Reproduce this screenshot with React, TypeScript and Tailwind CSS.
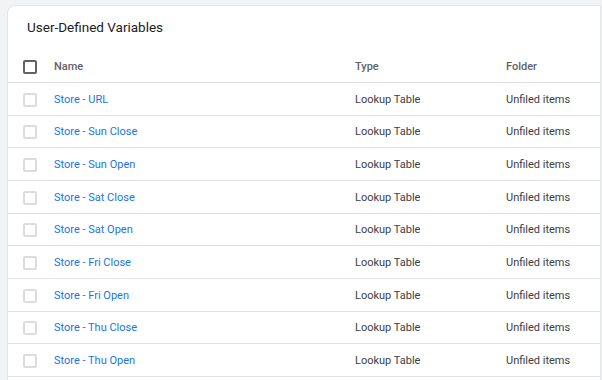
const rows = [
  'Store - URL',
  'Store - Sun Close',
  'Store - Sun Open',
  'Store - Sat Close',
  'Store - Sat Open',
  'Store - Fri Close',
  'Store - Fri Open',
  'Store - Thu Close',
  'Store - Thu Open',
];

export default function App() {
  return (
    <div className="h-[380px] w-[602px] overflow-hidden bg-[#f1f3f4] pl-[7px] pt-[5px] font-['Roboto',sans-serif]">
      <div className="h-[400px] w-[594px] rounded-tl-lg border border-[#e3e5e8] bg-white">
        <div className="h-[16px] pl-[19px] mt-[13px] text-[13.5px] leading-[16px] text-[#202124]">User-Defined Variables</div>
        <div className="mt-[17px] flex h-[31px] items-center border-b border-[#e0e0e0] text-[11px] font-medium text-[#5f6368]">
          <div className="ml-[15px] h-[14px] w-[14px] rounded-[2px] border-2 border-[#5f6368]" />
          <div className="ml-[17px] w-[301px]">Name</div>
          <div className="w-[151px]">Type</div>
          <div>Folder</div>
        </div>
        {rows.map((name) => (
          <div key={name} className="flex h-[32.67px] items-center border-b border-[#e0e0e0] pt-[2px] text-[11px]">
            <div className="ml-[15px] h-[14px] w-[14px] rounded-[2px] border-2 border-[#dadce0]" />
            <div className="ml-[17px] w-[301px] text-[#1a73e8]">{name}</div>
            <div className="w-[151px] text-[#3c4043]">Lookup Table</div>
            <div className="text-[#3c4043]">Unfiled items</div>
          </div>
        ))}
      </div>
    </div>
  );
}
